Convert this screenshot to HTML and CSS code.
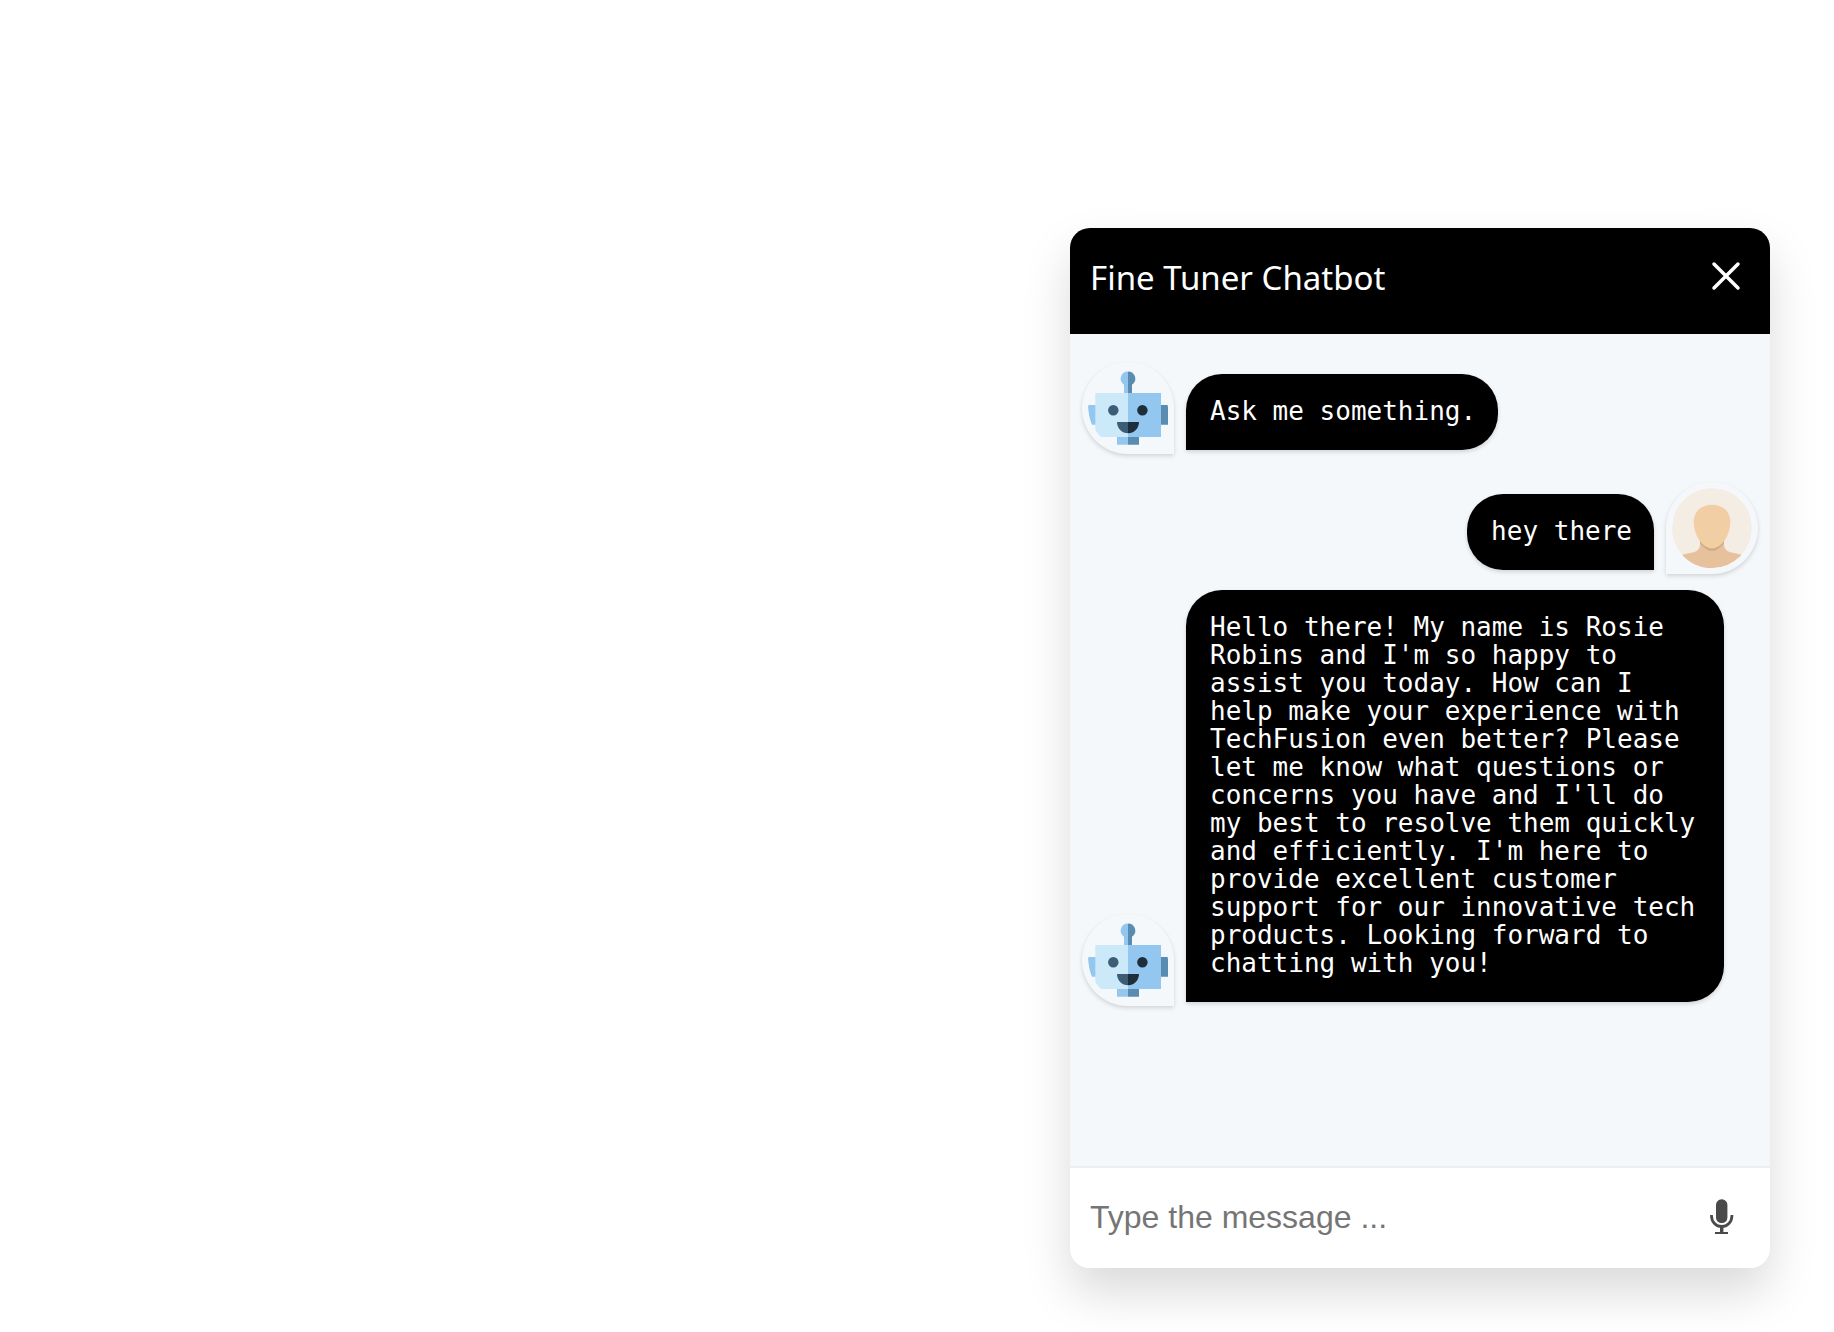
FILE: index.html
```html
<!DOCTYPE html>
<html lang="en">
<head>
<meta charset="utf-8">
<meta name="viewport" content="width=device-width, initial-scale=1">
<title>Fine Tuner Chatbot</title>
<link rel="stylesheet" href="styles.css">
</head>
<body>
<svg class="sprite" aria-hidden="true">
  <symbol id="robot" viewBox="0 0 80 80">
    <path fill="#93c7ef" d="M40 3.4a7.3 7.3 0 0 0-4 13.4V26h4z"/>
    <path fill="#5a8bb0" d="M40 3.4a7.3 7.3 0 0 1 4 13.4V26h-4z"/>
    <path fill="#93c7ef" d="M0 37h8v19.7H4Q0 48 0 37z"/>
    <path fill="#5a8bb0" d="M72 37h8v19.7h-8z"/>
    <path fill="#93c7ef" d="M29 68h11v8.7H29z"/>
    <path fill="#5a8bb0" d="M40 68h11v8.7H40z"/>
    <path fill="#cbe9f9" d="M7.3 25H40v44H12.7l-5.4-6.3z"/>
    <path fill="#93c7ef" d="M40 25h33v44H40z"/>
    <circle cx="25.3" cy="42.3" r="5.2" fill="#3c5d76"/>
    <circle cx="54.4" cy="42.3" r="5.2" fill="#1e2e3b"/>
    <path fill="#3c5d76" d="M29 54h11v11.3A11 11.3 0 0 1 29 54z"/>
    <path fill="#1e2e3b" d="M51 54H40v11.3A11 11.3 0 0 0 51 54z"/>
  </symbol>
  <symbol id="person" viewBox="0 0 80 80">
    <circle cx="40" cy="40" r="40" fill="#f4ede4"/>
    <path fill="#e6c19c" d="M28 50v6.500Q28 62 22.500 64L10 66.700A40 40 0 0 0 70 66.700L57.500 64Q52 62 52 56.500V50z"/>
    <path fill="#d3ac86" d="M28 50v5.500C32 60 35.500 63 40 63s8-3 12-7.500V50z"/>
    <path fill="#f1cea4" d="M40 16.700C29 16.700 21.700 23.500 21.700 34C21.700 48 31 60.300 40 60.300S58.300 48 58.300 34C58.300 23.500 51 16.700 40 16.700z"/>
  </symbol>
</svg>

<main class="chat">
  <header class="chat-header">
    <h1 class="chat-title">Fine Tuner Chatbot</h1>
    <button class="icon-button icon-button-light" type="button" aria-label="Close">
      <svg class="icon" viewBox="0 0 48 48" fill="none" stroke="currentColor" stroke-width="3.500" stroke-linecap="round"><path d="M12 12l24 24M36 12L12 36"/></svg>
    </button>
  </header>

  <section class="messages" aria-label="Conversation">
    <div class="message">
      <svg class="avatar" role="img" aria-label="Bot"><use href="#robot"/></svg>
      <p class="bubble">Ask me something.</p>
    </div>
    <div class="message message-user">
      <svg class="avatar" role="img" aria-label="You"><use href="#person"/></svg>
      <p class="bubble">hey there</p>
    </div>
    <div class="message">
      <svg class="avatar" role="img" aria-label="Bot"><use href="#robot"/></svg>
      <p class="bubble">Hello there! My name is Rosie Robins and I'm so happy to assist you today. How can I help make your experience with TechFusion even better? Please let me know what questions or concerns you have and I'll do my best to resolve them quickly and efficiently. I'm here to provide excellent customer support for our innovative tech products. Looking forward to chatting with you!</p>
    </div>
  </section>

  <form class="composer">
    <input class="composer-input" type="text" placeholder="Type the message ..." aria-label="Message">
    <button class="icon-button" type="button" aria-label="Speak">
      <svg class="icon" viewBox="0 0 48 48" fill="currentColor"><rect x="18" y="6.300" width="11.400" height="23.700" rx="5.500"/><path d="M13.500 22v1a10.200 10.500 0 0 0 20.400 0v-1" fill="none" stroke="currentColor" stroke-width="2.800"/><path d="M22 33h3.400v6H30v2H17v-2h5z"/></svg>
    </button>
  </form>
</main>
</body>
</html>
```
FILE: styles.css
```css
* {
  box-sizing: border-box;
}

body {
  display: flex;
  justify-content: flex-end;
  align-items: flex-end;
  min-height: 100vh;
  margin: 0;
  padding: 64px;
  background: #fff;
}

.sprite {
  position: absolute;
  width: 0;
  height: 0;
}

.chat {
  display: flex;
  flex-direction: column;
  width: 100%;
  max-width: 700px;
  min-height: min(1040px, calc(100vh - 128px));
  overflow: hidden;
  border-radius: 20px;
  background: #f5f8fb;
  box-shadow: 0 24px 48px rgba(0, 0, 0, 0.15);
}

.chat-header {
  display: flex;
  justify-content: space-between;
  align-items: flex-start;
  padding: 24px 20px 30px;
  background: #000;
  color: #fff;
}

.chat-title {
  margin: 0;
  font: 400 33px/52px "Noto Sans", sans-serif;
}

.icon-button {
  flex: none;
  padding: 0;
  border: 0;
  background: none;
  color: #4a4a4a;
  cursor: pointer;
}

.icon-button-light {
  color: #fff;
}

.icon {
  display: block;
  width: 48px;
  height: 48px;
}

.messages {
  display: flex;
  flex: 1;
  flex-direction: column;
  gap: 16px;
  padding: 16px 12px;
}

.message {
  display: flex;
  align-items: flex-end;
  gap: 12px;
}

.message-user {
  flex-direction: row-reverse;
}

.avatar {
  flex: none;
  width: 92px;
  height: 92px;
  margin-top: 12px;
  padding: 6px;
  border-radius: 50% 50% 0 50%;
  box-shadow: 0 2px 4px rgba(0, 0, 0, 0.15);
  background: #f5f8fb;
}

.message-user .avatar {
  border-radius: 50% 50% 50% 0;
}

.bubble {
  max-width: 538px;
  margin: 0 0 4px;
  padding: 23px 22px 25px 24px;
  border-radius: 36px 36px 36px 0;
  background: #000;
  box-shadow: 0 2px 4px rgba(0, 0, 0, 0.15);
  color: #fff;
  font: 400 26px/28px "DejaVu Sans Mono", monospace;
}

.message-user .bubble {
  border-radius: 36px 36px 0 36px;
}

.composer {
  display: flex;
  align-items: center;
  gap: 12px;
  padding: 0 24px 2px 20px;
  border-top: 2px solid #eee;
  background: #fff;
}

.composer-input {
  flex: 1;
  min-width: 0;
  height: 98px;
  padding: 0;
  border: 0;
  outline: 0;
  background: none;
  color: #4a4a4a;
  font: 400 32px/40px "Liberation Sans", Arial, sans-serif;
}

.composer-input::placeholder {
  color: #757575;
}
```
